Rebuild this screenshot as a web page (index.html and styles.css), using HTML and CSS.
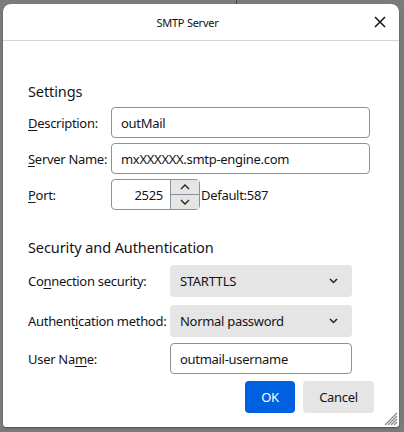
FILE: index.html
```html
<!DOCTYPE html>
<html>
<head>
<meta charset="utf-8">
<link rel="stylesheet" href="styles.css">
</head>
<body>
<div class="backdrop-line"></div>
<div class="dialog">
  <div class="titlebar">
    <span class="title">SMTP Server</span>
    <svg class="close" width="12" height="12" viewBox="0 0 12 12"><path d="M1 1L11 11M11 1L1 11" stroke="#1b1b1b" stroke-width="1.6" fill="none"/></svg>
  </div>
  <div class="content">
    <div class="heading h1">Settings</div>
    <div class="row r-desc">
      <label class="lbl1"><u>D</u>escription:</label>
      <div class="field wide">outMail</div>
    </div>
    <div class="row r-server">
      <label class="lbl1"><u>S</u>erver Name:</label>
      <div class="field wide">mxXXXXXX.smtp-engine.com</div>
    </div>
    <div class="row r-port">
      <label class="lbl1"><u>P</u>ort:</label>
      <div class="field port">
        <span class="portval">2525</span>
        <div class="spin">
          <div class="spinbtn"><svg width="10" height="6" viewBox="0 0 10 6"><path d="M1 5L5 1L9 5" stroke="#222" stroke-width="1.4" fill="none"/></svg></div>
          <div class="spinbtn"><svg width="10" height="6" viewBox="0 0 10 6"><path d="M1 1L5 5L9 1" stroke="#222" stroke-width="1.4" fill="none"/></svg></div>
        </div>
      </div>
      <span class="default">Default:587</span>
    </div>

    <div class="heading h2">Security and Authentication</div>
    <div class="row r-conn">
      <label class="lbl2">Co<u>n</u>nection security:</label>
      <div class="select">STARTTLS<svg class="chev" width="9" height="6" viewBox="0 0 9 6"><path d="M1 1L4.5 4.5L8 1" stroke="#222" stroke-width="1.5" fill="none"/></svg></div>
    </div>
    <div class="row r-auth">
      <label class="lbl2">Authent<u>i</u>cation method:</label>
      <div class="select">Normal password<svg class="chev" width="9" height="6" viewBox="0 0 9 6"><path d="M1 1L4.5 4.5L8 1" stroke="#222" stroke-width="1.5" fill="none"/></svg></div>
    </div>
    <div class="row r-user">
      <label class="lbl2">User Na<u>m</u>e:</label>
      <div class="field user">outmail-username</div>
    </div>
    <div class="buttons">
      <button class="btn ok">OK</button>
      <button class="btn cancel">Cancel</button>
    </div>
  </div>
  <svg class="grip" width="16" height="16" viewBox="0 0 16 16">
    <path d="M15 3L3 15M15 6L6 15M15 9L9 15M15 12L12 15" stroke="#8a8a8a" stroke-width="1.2" fill="none"/>
  </svg>
</div>
</body>
</html>
```
FILE: styles.css
```css
html, body {
  margin: 0;
  padding: 0;
}
body {
  width: 404px;
  height: 432px;
  background: #7b7b7b;
  overflow: hidden;
  position: relative;
  font-family: "Segoe UI", "Noto Sans", "Open Sans", sans-serif;
  color: #15141a;
}
.backdrop-line {
  position: absolute;
  left: 236px;
  top: 0;
  width: 1px;
  height: 4px;
  background: #4a4a4a;
}
.dialog {
  position: relative;
  margin: 4px 0 0 3px;
  width: 396px;
  height: 423px;
  background: #fff;
  border-radius: 8px 8px 3px 3px;
  box-shadow: 0 1px 2px rgba(0,0,0,0.35);
  display: flex;
  flex-direction: column;
}
.titlebar {
  height: 36px;
  border-bottom: 1px solid #d4d4d4;
  display: flex;
  align-items: center;
  justify-content: center;
  position: relative;
}
.title {
  font-size: 11px;
  letter-spacing: -0.25px;
  color: #111;
  margin-left: -27px;
}
.close {
  position: absolute;
  right: 13px;
  top: 12px;
}
.content {
  padding: 0 0 0 25px;
  font-size: 13px;
  letter-spacing: -0.3px;
  white-space: nowrap;
}
.heading {
  font-size: 14.5px;
  letter-spacing: -0.1px;
  line-height: 20px;
  height: 20px;
}
.h1 { margin-top: 40px; }
.h2 { margin-top: 27px; }
.row {
  display: flex;
  align-items: center;
}
.r-desc { margin-top: 6px; }
.r-server { margin-top: 5px; }
.r-port { margin-top: 5px; }
.r-conn { margin-top: 8px; }
.r-auth { margin-top: 8px; }
.r-user { margin-top: 6px; }
.lbl1 { width: 83px; }
.lbl2 { width: 142px; }
label u { text-decoration-thickness: 1px; text-underline-offset: 2px; }
.field {
  box-sizing: border-box;
  height: 31px;
  border: 1px solid #8f8f9d;
  border-radius: 4px;
  display: flex;
  align-items: center;
  padding-left: 9px;
}
.wide { width: 259px; }
.port {
  width: 89px;
  padding-left: 0;
  justify-content: space-between;
}
.portval {
  width: 51px;
  text-align: right;
}
.spin {
  width: 28px;
  height: 29px;
  display: flex;
  flex-direction: column;
  border-left: 1px solid #8f8f9d;
}
.spinbtn {
  flex: 1;
  background: #e5e5e5;
  display: flex;
  align-items: center;
  justify-content: center;
}
.spinbtn + .spinbtn { border-top: 1px solid #8f8f9d; }
.default { margin-left: 1px; }
.select {
  box-sizing: border-box;
  width: 182px;
  height: 32px;
  background: #e5e5e5;
  border-radius: 4px;
  display: flex;
  align-items: center;
  justify-content: space-between;
  padding: 0 14px 0 10px;
}
.user { width: 182px; }
.buttons {
  display: flex;
  justify-content: flex-end;
  gap: 8px;
  margin-top: 7px;
  padding-right: 25px;
}
.btn {
  height: 32px;
  border: none;
  border-radius: 4px;
  font-family: inherit;
  font-size: 13px;
  letter-spacing: -0.3px;
  padding: 0;
}
.ok {
  width: 50px;
  background: #0061e0;
  color: #fff;
}
.cancel {
  width: 71px;
  background: #e5e5e5;
  color: #15141a;
}
.grip {
  position: absolute;
  right: 1px;
  bottom: 1px;
}
```
